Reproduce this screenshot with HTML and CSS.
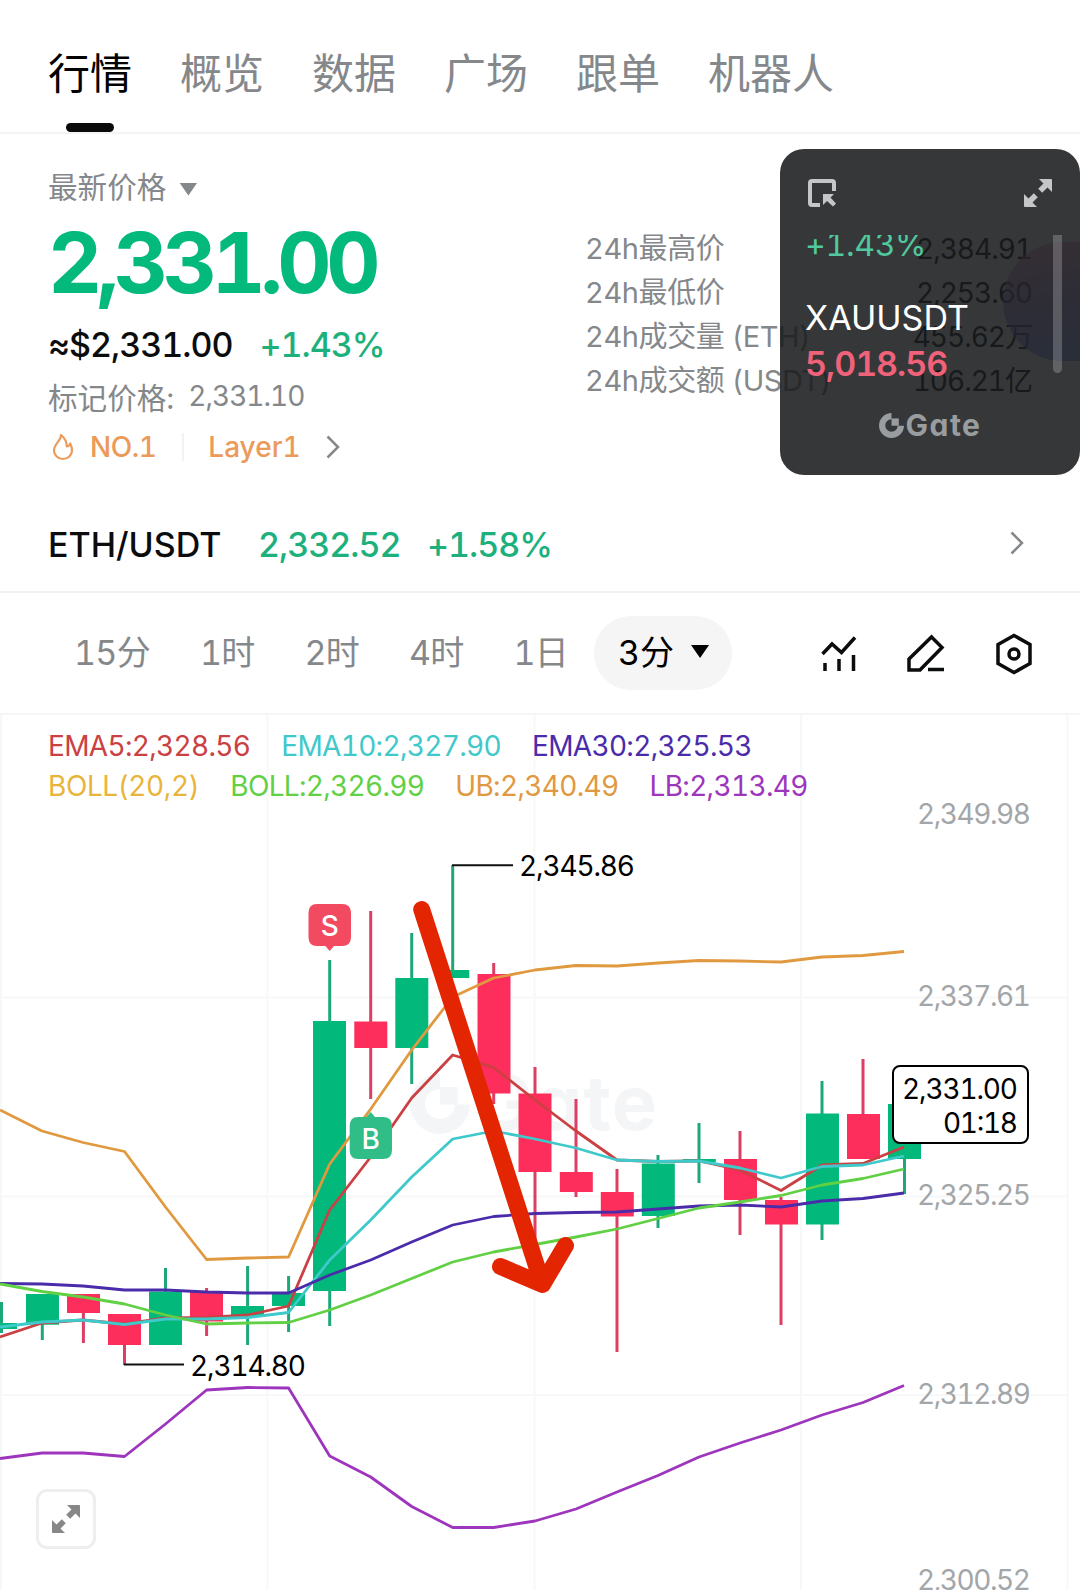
FILE: index.html
```html
<!DOCTYPE html>
<html lang="zh-CN">
<head>
<meta charset="UTF-8">
<title>ETHUSDT 行情</title>
<meta name="viewport" content="width=device-width, initial-scale=1.0">
<link rel="stylesheet" href="styles.css">
</head>
<body>
<svg class="defs" width="0" height="0">
    <symbol id="expand" viewBox="0 0 28 28">
        <path d="M15 0H27Q28 0 28 1V13L23.500 8.500L18.200 13.800L14.200 9.800L19.500 4.500Z M13 28H1Q0 28 0 27V15L4.500 19.500L9.800 14.200L13.800 18.200L8.500 23.500Z" fill="currentColor" stroke="none"/>
    </symbol>
    <symbol id="gate" viewBox="0 0 60 60">
        <path d="M30 7.500A22.500 22.500 0 1 0 52.500 30.500" fill="none" stroke="currentColor" stroke-width="15"/>
        <path d="M30 13H47.500V30.500H30Z" fill="currentColor"/>
    </symbol>
</svg>

<nav class="tabs">
    <a class="tab active">行情</a>
    <a class="tab">概览</a>
    <a class="tab">数据</a>
    <a class="tab">广场</a>
    <a class="tab">跟单</a>
    <a class="tab">机器人</a>
</nav>

<section class="summary">
    <div class="quote">
        <div class="type">最新价格<i class="caret"></i></div>
        <div class="price">2,331.00</div>
        <div class="approx"><span>≈$2,331.00</span><span class="up">+1.43%</span></div>
        <div class="mark"><span>标记价格:</span><span class="mark-price">2,331.10</span></div>
        <div class="tags">
            <svg class="flame" width="22" height="28" viewBox="0 0 22 28"><path d="M9 2C9 8 2 11 2 17.500A9 8.500 0 0 0 20 17.500C20 14 19 12 18.200 10.500C17.500 12.500 16.500 13.500 14.800 13.500C14.800 8 12 4.500 9 2Z" fill="none" stroke="currentColor" stroke-width="2.200" stroke-linejoin="round"/></svg>
            <span class="rank">NO.1</span>
            <i class="bar"></i>
            <span class="layer">Layer1</span>
            <svg class="chevron" width="14" height="24" viewBox="0 0 14 24"><path d="M1.500 1.500L12 12L1.500 22.500"/></svg>
        </div>
    </div>
    <dl class="stats">
        <div><dt>24h最高价</dt><dd>2,384.91</dd></div>
        <div><dt>24h最低价</dt><dd>2,253.60</dd></div>
        <div><dt>24h成交量 (ETH)</dt><dd>455.62万</dd></div>
        <div><dt>24h成交额 (USDT)</dt><dd>106.21亿</dd></div>
    </dl>
    <i class="orb"></i>
    <aside class="float">
        <div class="float-head">
            <svg width="28" height="28" viewBox="0 0 28 28"><path d="M26 12V4Q26 2 24 2H4Q2 2 2 4V24Q2 26 4 26H12" fill="none" stroke="currentColor" stroke-width="4"/><path d="M15 15H26L22.500 18.500L28 24.500L25 27.500L19 22L15 26Z" fill="currentColor"/></svg>
            <svg width="28" height="28"><use href="#expand"/></svg>
        </div>
        <div class="float-list">
            <div class="change">+1.43%</div>
            <div class="symbol">XAUUSDT</div>
            <div class="last">5,018.56</div>
            <i class="scroll"></i>
        </div>
        <div class="float-logo"><svg width="25" height="25"><use href="#gate"/></svg><span>Gate</span></div>
    </aside>
</section>

<section class="pair">
    <span class="name">ETH/USDT</span>
    <span class="pair-price">2,332.52</span>
    <span class="pair-change">+1.58%</span>
    <svg class="chevron" width="14" height="24" viewBox="0 0 14 24"><path d="M1.500 1.500L12 12L1.500 22.500"/></svg>
</section>

<section class="periods">
    <span class="p15">15分</span>
    <span>1时</span>
    <span>2时</span>
    <span>4时</span>
    <span>1日</span>
    <span class="current">3分<i class="caret"></i></span>
    <div class="tools">
        <svg width="36" height="40" viewBox="0 0 36 40"><path d="M1.500 20L11 10L20.500 18.500L34 3.500M4 29V37M18 25V37M32.500 21V37"/></svg>
        <svg width="38" height="40" viewBox="0 0 38 40"><path d="M2 36V25L24.500 3L35 13.500L13 36ZM21 35.500H37"/></svg>
        <svg width="38" height="42" viewBox="0 0 38 42"><path d="M19 2.500L35 11.500V30.500L19 39.500L3 30.500V11.500Z"/><circle cx="19" cy="21" r="5"/></svg>
    </div>
</section>

<section class="chart">
    <svg class="kline" width="1080" height="875" viewBox="0 715 1080 875">
        <path class="grid" d="M1 715V1590M267.500 715V1590M534.500 715V1590M801 715V1590M1067.500 715V1590M0 997.500H1067M0 1196.500H1067M0 1395H1067"/>

        <g class="watermark">
            <svg x="410" y="1074" width="60" height="60"><use href="#gate"/></svg>
            <text x="476" y="1130" textLength="181">Gate</text>
        </g>

        <g class="axis">
            <text x="1031" y="824" textLength="114">2,349.98</text>
            <text x="1031" y="1006" textLength="114">2,337.61</text>
            <text x="1031" y="1205" textLength="114">2,325.25</text>
            <text x="1031" y="1404" textLength="114">2,312.89</text>
            <text x="1031" y="1590" textLength="114">2,300.52</text>
        </g>

        <!-- wicks -->
        <path class="wick rise" d="M1.500 1302V1333M42.300 1300V1340M165.500 1268V1320M247.600 1266V1345M288.600 1276V1332M329.700 960V1326M411.700 933V1084M452.700 865V978M658 1155V1228M699 1123V1183M822 1081V1240M904.500 1110V1194"/>
        <path class="wick fall" d="M83.400 1300V1343M124.500 1320V1365M206.600 1288V1336M370.700 911V1099M493.700 963V1104M535 1067V1245M576 1099V1197M617 1169V1352M740 1131V1235M781 1197V1325M863 1059V1150"/>
        <!-- bodies -->
        <g class="rise">
            <rect x="0" y="1323" width="17" height="6"/>
            <rect x="26" y="1294" width="33" height="30.700"/>
            <rect x="149" y="1291.500" width="33" height="53.500"/>
            <rect x="231" y="1306" width="33" height="11"/>
            <rect x="272" y="1293" width="33" height="13"/>
            <rect x="313" y="1021" width="33" height="270"/>
            <rect x="395.300" y="978" width="33" height="70"/>
            <rect x="436.300" y="970" width="33" height="8"/>
            <rect x="641.800" y="1163.500" width="33" height="52.500"/>
            <rect x="682.800" y="1159" width="33" height="3"/>
            <rect x="806" y="1113.500" width="33" height="111"/>
            <rect x="888" y="1104" width="33" height="55"/>
        </g>
        <g class="fall">
            <rect x="67" y="1294" width="33" height="19"/>
            <rect x="108" y="1314" width="33" height="31"/>
            <rect x="190" y="1292" width="33" height="29.500"/>
            <rect x="354.300" y="1021.500" width="33" height="26.500"/>
            <rect x="477.500" y="974" width="33" height="119.500"/>
            <rect x="518.500" y="1093.500" width="33" height="78.500"/>
            <rect x="559.800" y="1172" width="33" height="20"/>
            <rect x="600.800" y="1192" width="33" height="24.500"/>
            <rect x="724" y="1159" width="33" height="41"/>
            <rect x="765" y="1200" width="33" height="24.500"/>
            <rect x="847" y="1114" width="33" height="45"/>
        </g>

        <g class="lines">
            <polyline class="ema5" points="0,1337 42,1323 83,1320 124.500,1324 165.500,1318 206.600,1317.500 247.600,1315 288.600,1306 329.700,1210 370.700,1157 411.700,1098 452.700,1055 493.700,1067.500 535,1100 576,1131 617,1160 658,1161.500 699,1161 740,1170 781,1190.500 822,1165 863,1163.500 904,1147"/>
            <polyline class="ema10" points="0,1327 42,1322 83,1320 124.500,1324.500 165.500,1319 206.600,1319 247.600,1317.500 288.600,1312.500 329.700,1260 370.700,1220 411.700,1177 452.700,1139 493.700,1131 535,1139 576,1148 617,1160 658,1161.500 699,1161 740,1168 781,1178 822,1166.500 863,1165 904,1156"/>
            <polyline class="ema30" points="0,1283.500 42,1284 83,1286 124.500,1290 165.500,1290 206.600,1292 247.600,1293 288.600,1293 329.700,1275 370.700,1260 411.700,1242 452.700,1225 493.700,1216.500 535,1213.500 576,1212.500 617,1212 658,1209 699,1206 740,1205 781,1207 822,1201 863,1198.500 904,1193"/>
            <polyline class="boll" points="0,1284 42,1291.500 83,1297 124.500,1304 165.500,1315 206.600,1324 247.600,1323 288.600,1322.500 329.700,1310 370.700,1295 411.700,1278.500 452.700,1262 493.700,1252 535,1244.500 576,1237 617,1229 658,1218.500 699,1208 740,1202 781,1195.500 822,1185 863,1178.500 904,1169"/>
            <polyline class="ub" points="0,1110 42,1131 83,1142.500 124.500,1151.500 165.500,1207 206.600,1259.500 247.600,1258 288.600,1257 329.700,1164 370.700,1109 411.700,1050 452.700,997 493.700,978 535,970 576,965.500 617,966 658,963 699,960.500 740,961 781,962 822,957 863,955.500 904,951.500"/>
            <polyline class="lb" points="0,1458.500 42,1453 83,1453 124.500,1456.500 165.500,1424 206.600,1390 247.600,1387.500 288.600,1388 329.700,1456 370.700,1477 411.700,1506.500 452.700,1527.500 493.700,1527.500 535,1521 576,1509 617,1492 658,1475.500 699,1457 740,1443 781,1430 822,1415 863,1402.500 904,1385.500"/>
        </g>

        <g class="extreme">
            <path d="M452 865.300H513M124 1364.500H184"/>
            <text x="519" y="876" textLength="116">2,345.86</text>
            <text x="190" y="1376" textLength="116">2,314.80</text>
        </g>

        <g class="mark-sell">
            <path d="M317 904H342Q351 904 351 913V937Q351 946 342 946H334L329.700 951L325.400 946H317Q308.500 946 308.500 937V913Q308.500 904 317 904Z"/>
            <text x="329.700" y="936">S</text>
        </g>
        <g class="mark-buy">
            <path d="M358 1117H366.400L370.700 1112L375 1117H383Q392 1117 392 1126V1150Q392 1159 383 1159H358Q349.700 1159 349.700 1150V1126Q349.700 1117 358 1117Z"/>
            <text x="370.700" y="1149">B</text>
        </g>

        <g class="now">
            <rect x="893" y="1066" width="135" height="77" rx="7"/>
            <text x="1018" y="1099" textLength="116">2,331.00</text>
            <text x="1018" y="1133" textLength="75">01:18</text>
        </g>

        <path class="arrow" d="M421.700 909.500L542.500 1284.500M500.500 1266.500L542.500 1284.500L565.500 1245.500"/>
    </svg>

    <div class="legend">
        <div><span class="ema5">EMA5:2,328.56</span><span class="ema10">EMA10:2,327.90</span><span class="ema30">EMA30:2,325.53</span></div>
        <div><span class="boll-name">BOLL(20,2)</span><span class="boll">BOLL:2,326.99</span><span class="ub">UB:2,340.49</span><span class="lb">LB:2,313.49</span></div>
    </div>
    <button class="full"><svg width="28" height="28"><use href="#expand"/></svg></button>
</section>
</body>
</html>
```
FILE: styles.css
```css
* {
    margin: 0;
    padding: 0;
    box-sizing: border-box;
}

body {
    width: 1080px;
    height: 1590px;
    overflow: hidden;
    background: #fff;
    color: #0b0c0d;
    font-family: Inter, "Noto Sans CJK SC", sans-serif;
    font-feature-settings: "tnum";
    font-size: 28px;
    white-space: nowrap;
}

svg {
    display: block;
    flex: none;
}

.defs {
    position: absolute;
}

.tabs {
    display: flex;
    gap: 48px;
    height: 134px;
    padding: 0 48px;
    border-bottom: 2px solid #f3f4f4;
    color: #85888b;
    font-size: 42px;
    line-height: 148px;
}

.tab {
    display: flex;
    flex-direction: column;
    height: 132px;
}

.tab.active {
    color: #000;
}

.tab.active:after {
    content: '';
    flex: none;
    align-self: center;
    margin-top: -25px;
    width: 48px;
    height: 9px;
    border-radius: 5px;
    background: #0a0a0a;
}

.summary {
    position: relative;
    display: flex;
    height: 364px;
    padding: 31px 48px 0;
}

.quote {
    width: 537px;
}

.quote > div {
    display: flex;
    align-items: center;
}

.caret {
    width: 18px;
    height: 13px;
    background: currentColor;
    clip-path: polygon(0 0, 100% 0, 50% 100%);
}

.quote .type {
    gap: 13px;
    height: 40px;
    color: #85888b;
    font-size: 29.600px;
}

.type .caret {
    margin-top: 8px;
}

.quote .price {
    height: 114px;
    color: #04b97c;
    font-size: 84px;
    font-weight: 700;
    letter-spacing: -5.500px;
}

.quote .approx {
    gap: 27px;
    height: 50px;
    font-size: 34px;
    font-weight: 500;
    letter-spacing: -1px;
}

.up {
    color: #1cb07d;
}

.quote .mark {
    gap: 14px;
    height: 54px;
    color: #85888b;
    font-size: 29.600px;
}

.mark-price {
    font-size: 28px;
    letter-spacing: -1px;
}

.quote .tags {
    height: 48px;
    color: #ec9a5a;
    font-weight: 500;
}

.flame {
    margin-left: 4px;
}

.rank {
    margin-left: 16px;
    letter-spacing: -.500px;
}

.bar {
    width: 2px;
    height: 28px;
    margin: 0 24px 0 26px;
    background: #f2f2f2;
}

.chevron {
    fill: none;
    stroke: #85888b;
    stroke-width: 2.500;
}

.tags .chevron {
    margin-left: 25px;
}

.stats {
    width: 447px;
    padding-top: 62px;
}

.stats div {
    display: flex;
    justify-content: space-between;
    height: 44px;
    line-height: 44px;
}

.stats dt {
    color: #85888b;
    font-size: 29px;
    letter-spacing: -.400px;
}

.stats dd {
    letter-spacing: -1px;
}

.orb {
    position: absolute;
    top: 108px;
    right: 0;
    width: 77px;
    height: 119px;
    border-radius: 60px 0 0 60px / 60px 0 0 60px;
    background: linear-gradient(170deg, #ff8fb8, #a070e0 45%, #5a80ff);
    opacity: .6;
}

.float {
    position: absolute;
    top: 15px;
    right: 0;
    width: 300px;
    height: 326px;
    border-radius: 24px;
    background: rgba(25, 27, 28, .88);
    color: #c4c6c7;
}

.float-head {
    display: flex;
    justify-content: space-between;
    padding: 30px 28px 0;
}

.float-list {
    position: relative;
    height: 150px;
    margin-top: 28px;
    padding-left: 25px;
    overflow: hidden;
    font-size: 34px;
}

.change {
    height: 65px;
    margin-top: -6px;
    color: #4fc99d;
    font-size: 32px;
    line-height: 31px;
    letter-spacing: -.300px;
}

.symbol {
    color: #fff;
    line-height: 47px;
}

.last {
    color: #f0627a;
    font-weight: 600;
    letter-spacing: -1px;
    line-height: 46px;
}

.scroll {
    position: absolute;
    top: 0;
    right: 18px;
    width: 9px;
    height: 138px;
    border-radius: 0 0 5px 5px;
    background: rgba(255, 255, 255, .22);
}

.float-logo {
    display: flex;
    align-items: center;
    justify-content: center;
    gap: 2px;
    height: 80px;
    color: #9a9da0;
    font-size: 30px;
    font-weight: 700;
    font-feature-settings: "cv11";
    letter-spacing: 1.500px;
}

.pair {
    display: flex;
    align-items: center;
    height: 95px;
    padding: 0 56px 0 48px;
    border-bottom: 2px solid #f0f1f1;
    font-size: 34px;
    font-weight: 500;
}

.name {
    width: 210px;
}

.pair-price,
.pair-change {
    color: #1cb07d;
    letter-spacing: -1px;
}

.pair-price {
    width: 169px;
}

.pair .chevron {
    margin: -4px 0 0 auto;
}

.periods {
    display: flex;
    align-items: center;
    height: 122px;
    padding: 0 47px 0 200px;
    border-bottom: 2px solid #f5f5f5;
    color: #85888b;
    font-size: 34px;
    letter-spacing: -.700px;
    line-height: 1;
}

.periods span {
    width: 104.500px;
}

.periods .p15 {
    margin-left: -126px;
    width: 126px;
}

.periods .current {
    display: flex;
    align-items: center;
    gap: 17px;
    width: 138px;
    height: 74px;
    margin-left: -24px;
    padding-left: 24px;
    border-radius: 37px;
    background: #f5f5f5;
    color: #000;
    letter-spacing: 0;
}

.current .caret {
    margin-top: -3px;
}

.tools {
    display: flex;
    align-items: center;
    gap: 50px;
    margin: 2px 0 0 auto;
    fill: none;
    stroke: #0b0c0d;
    stroke-width: 3.500;
}

.chart {
    position: relative;
    height: 875px;
}

.legend {
    position: absolute;
    top: 11px;
    left: 48px;
    line-height: 40px;
    letter-spacing: -.680px;
}

.legend div {
    display: flex;
    gap: 31px;
}

.ema5 { color: #cb4043; }
.ema10 { color: #3fc9ca; }
.ema30 { color: #4a2cab; }
.boll-name { color: #e8b53a; letter-spacing: -.400px; }
.boll { color: #62d044; }
.ub { color: #e0993f; }
.lb { color: #9d35bd; }

.kline text {
    font-size: 28px;
}

.grid {
    fill: none;
    stroke: #f7f8f8;
    stroke-width: 2;
}

.kline .watermark {
    color: #f4f5f6;
    fill: #f4f5f6;
}

.kline .watermark text {
    font-size: 76px;
    font-weight: 700;
    font-feature-settings: "cv11";
}

.axis {
    fill: #a3a6a8;
    text-anchor: end;
}

.wick {
    stroke-width: 3;
}

.wick.rise { stroke: #1ea87a; }
.wick.fall { stroke: #dc3f63; }
.kline g.rise { fill: #02b97b; }
.kline g.fall { fill: #fe2e5c; }

.lines {
    fill: none;
    stroke-width: 2.800;
    stroke-linejoin: round;
}

.lines polyline {
    stroke: currentColor;
}

.extreme path {
    stroke: #111;
    stroke-width: 2;
}

.mark-sell path { fill: #f24a60; }
.mark-buy path { fill: #30bd87; }

.mark-sell text,
.mark-buy text {
    fill: #fff;
    text-anchor: middle;
    font-weight: 500;
}

.now rect {
    fill: #fff;
    stroke: #000;
    stroke-width: 2;
}

.now text {
    text-anchor: end;
}

.arrow {
    fill: none;
    stroke: #e42502;
    stroke-width: 17;
    stroke-linecap: round;
    stroke-linejoin: round;
}

.full {
    position: absolute;
    top: 774px;
    left: 36px;
    display: flex;
    align-items: center;
    justify-content: center;
    width: 60px;
    height: 60px;
    border: 3px solid #eee;
    border-radius: 11px;
    background: #fff;
    color: #878787;
}
```
